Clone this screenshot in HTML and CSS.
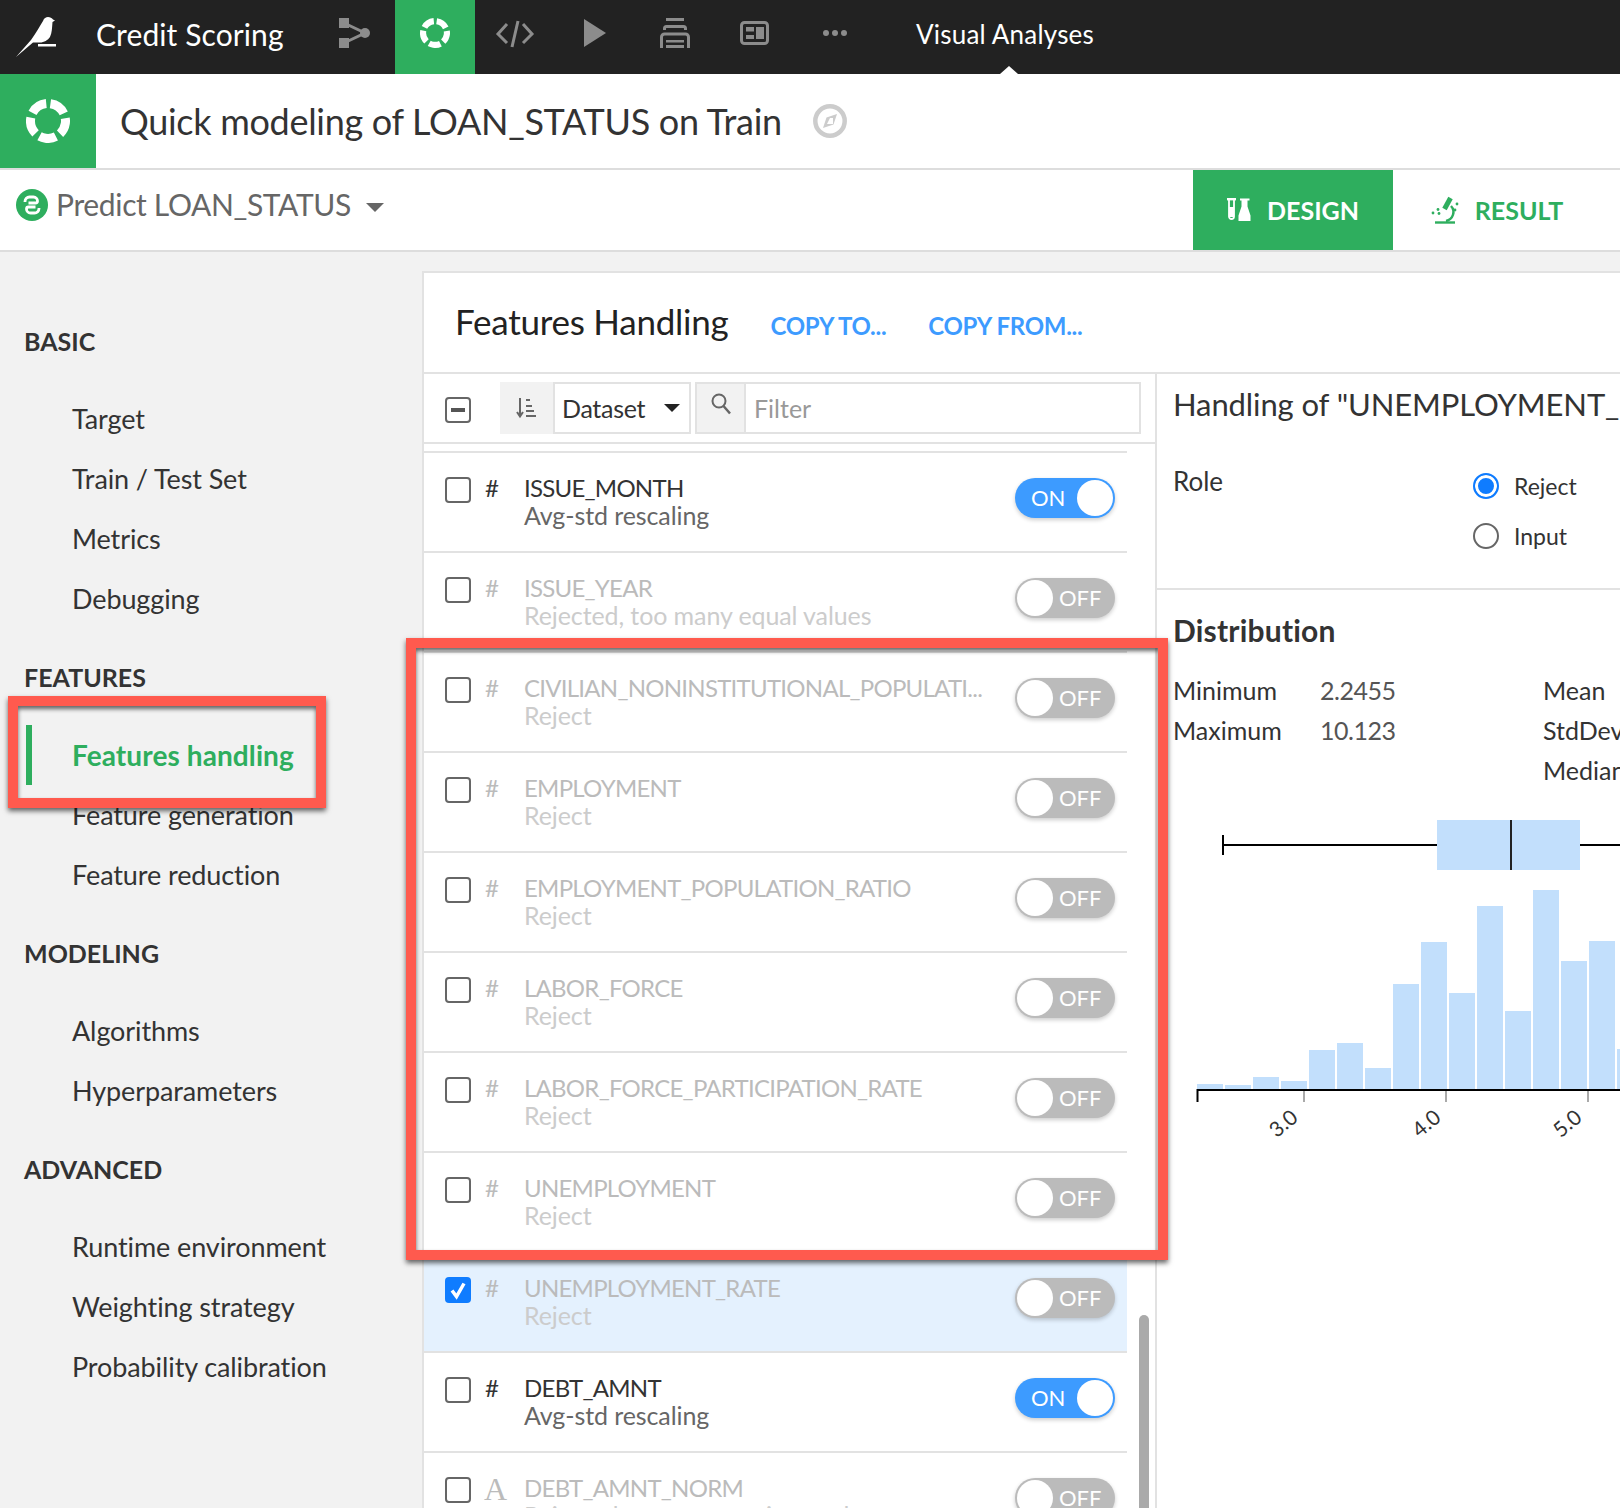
FILE: index.html
```html
<!DOCTYPE html>
<html lang="en">
<head>
    <meta charset="UTF-8">
    <title>Credit Scoring - Visual Analyses</title>
    <link rel="stylesheet" href="styles.css">
</head>
<body>
    <svg class="defs" width="0" height="0">
        <symbol id="ring" viewBox="0 0 44 44">
            <circle cx="22" cy="22" r="17.5" fill="none" stroke="#fff" stroke-width="9" stroke-dasharray="17 5" transform="rotate(-82 22 22)"/>
        </symbol>
    </svg>

    <div class="topbar">
        <svg class="logo" width="96" height="74" viewBox="0 0 96 74">
            <path fill="#fff" d="M16 57L31 40C36 33 40 26 43 21C44 18 46 17 48 17C50 17 52 18 53 19.5L55 20.5L52.5 22C52 28 52 33 50 37C48 40 44 42.500 40 42.500L33 42.500Z"/>
            <rect x="38" y="44" width="18" height="2.5" fill="#fff"/>
        </svg>
        <div class="project">Credit Scoring</div>
        <div class="nav-item">
            <svg width="80" height="74" viewBox="0 0 80 74">
                <path d="M29 23L50 33L29 43" fill="none" stroke="#8c8c8c" stroke-width="3"/>
                <rect x="24" y="18" width="10" height="10" fill="#8c8c8c"/>
                <rect x="24" y="38" width="10" height="10" fill="#8c8c8c"/>
                <circle cx="50" cy="33" r="5" fill="#8c8c8c"/>
            </svg>
        </div>
        <div class="nav-item active">
            <svg width="30" height="30"><use href="#ring"/></svg>
        </div>
        <div class="nav-item">
            <svg width="80" height="74" viewBox="0 0 80 74">
                <path d="M32 24L23 34L32 43M48 24L57 34L48 43M43 21L37 47" fill="none" stroke="#8c8c8c" stroke-width="3"/>
            </svg>
        </div>
        <div class="nav-item">
            <svg width="80" height="74" viewBox="0 0 80 74">
                <polygon points="29,19 51,33 29,47" fill="#8c8c8c"/>
            </svg>
        </div>
        <div class="nav-item">
            <svg width="80" height="74" viewBox="0 0 80 74">
                <g fill="none" stroke="#8c8c8c" stroke-width="3">
                    <path d="M31 19.5h18"/>
                    <path d="M29.5 30v-1.500a2 2 0 0 1 2-2h17a2 2 0 0 1 2 2v1.500"/>
                    <path d="M26.500 48v-11a3 3 0 0 1 3-3h21a3 3 0 0 1 3 3v11"/>
                </g>
                <rect x="31" y="40" width="18" height="2.500" fill="#8c8c8c"/>
                <rect x="31" y="45" width="18" height="3" fill="#8c8c8c"/>
            </svg>
        </div>
        <div class="nav-item">
            <svg width="80" height="74" viewBox="0 0 80 74">
                <rect x="26.500" y="22.500" width="26" height="21" rx="3" fill="none" stroke="#8c8c8c" stroke-width="3"/>
                <rect x="31" y="27" width="8" height="4.500" fill="#8c8c8c"/>
                <rect x="31" y="35" width="8" height="4" fill="#8c8c8c"/>
                <rect x="41" y="27" width="8" height="12" fill="#8c8c8c"/>
            </svg>
        </div>
        <div class="nav-item">
            <svg width="80" height="74" viewBox="0 0 80 74">
                <circle cx="31" cy="33" r="3" fill="#8c8c8c"/>
                <circle cx="40" cy="33" r="3" fill="#8c8c8c"/>
                <circle cx="49" cy="33" r="3" fill="#8c8c8c"/>
            </svg>
        </div>
        <div class="section-name">Visual Analyses</div>
    </div>

    <div class="titlebar">
        <div class="title-icon"><svg width="44" height="44"><use href="#ring"/></svg></div>
        <h1 class="title">Quick modeling of LOAN_STATUS on Train</h1>
        <svg class="compass" width="34" height="34" viewBox="0 0 34 34">
            <circle cx="17" cy="17" r="14.700" fill="none" stroke="#ccc" stroke-width="4.500"/>
            <polygon points="24,10 20.500,20.500 10,24 13.500,13.500" fill="#ccc"/>
            <polygon points="17,14 20,14 20,20 14,20" fill="#fff"/>
        </svg>
    </div>

    <div class="tabbar">
        <svg class="python" width="32" height="32" viewBox="0 0 32 32">
            <circle cx="16" cy="16" r="16" fill="#2eae5e"/>
            <g fill="none" stroke="#fff" stroke-width="2.800">
                <path id="snake" d="M9 13v-.5a4.500 4.500 0 0 1 4.500-4.500h4a4 4 0 0 1 4 4a2 2 0 0 1-2 2h-7"/>
                <use href="#snake" transform="rotate(180 16 16)"/>
            </g>
        </svg>
        <div class="task-name">Predict LOAN_STATUS</div>
        <div class="task-caret"></div>
        <div class="tab active">
            <svg width="24" height="24" viewBox="0 0 24 24">
                <path d="M0 1.200h9" stroke="#fff" stroke-width="2.400"/>
                <path d="M2 1v17.500a2.500 2.500 0 0 0 5 0V1" fill="none" stroke="#fff" stroke-width="1.800"/>
                <rect x="2" y="9" width="5" height="10" fill="#fff"/>
                <path d="M13 0.500h9.500v2h-2v6l3 9v5.500h-12v-5.500l3-9v-6h-1.500z" fill="#fff"/>
            </svg>
            DESIGN
        </div>
        <div class="tab">
            <svg width="28" height="28" viewBox="0 0 28 28">
                <path d="M4 26.500h20" stroke="#2eae5e" stroke-width="2.400"/>
                <path d="M19.500 2L13.500 13" stroke="#2eae5e" stroke-width="5"/>
                <path d="M20 10a9 9 0 0 1-5 15" fill="none" stroke="#2eae5e" stroke-width="2.400"/>
                <circle cx="2" cy="17" r="1.400" fill="#2eae5e"/>
                <circle cx="7" cy="13.500" r="1.400" fill="#2eae5e"/>
                <circle cx="8" cy="17.500" r="1.400" fill="#2eae5e"/>
                <circle cx="26" cy="8" r="1.400" fill="#2eae5e"/>
                <circle cx="24" cy="14" r="1.400" fill="#2eae5e"/>
            </svg>
            RESULT
        </div>
    </div>

    <div class="content">
        <div class="sidebar">
            <div class="side-title">BASIC</div>
            <div class="side-item">Target</div>
            <div class="side-item">Train / Test Set</div>
            <div class="side-item">Metrics</div>
            <div class="side-item">Debugging</div>
            <div class="side-title">FEATURES</div>
            <div class="side-item selected">Features handling</div>
            <div class="side-item">Feature generation</div>
            <div class="side-item">Feature reduction</div>
            <div class="side-title">MODELING</div>
            <div class="side-item">Algorithms</div>
            <div class="side-item">Hyperparameters</div>
            <div class="side-title">ADVANCED</div>
            <div class="side-item">Runtime environment</div>
            <div class="side-item">Weighting strategy</div>
            <div class="side-item">Probability calibration</div>
        </div>

        <div class="panel">
            <div class="panel-header">
                <h2 class="panel-title">Features Handling</h2>
                <span class="panel-link">COPY TO...</span>
                <span class="panel-link">COPY FROM...</span>
            </div>
            <div class="panel-body">
                <div class="features">
                    <div class="toolbar">
                        <div class="check minus"></div>
                        <div class="sort-btn">
                            <svg width="22" height="22" viewBox="0 0 22 22">
                                <path d="M4 1v18M1 15l3 4.500L7 15" fill="none" stroke="#666" stroke-width="2"/>
                                <path d="M10 3h4M10 9h6M10 14h8M10 19h10" stroke="#666" stroke-width="2"/>
                            </svg>
                        </div>
                        <div class="sort-select">Dataset<span class="select-caret"></span></div>
                        <div class="search">
                            <div class="search-icon">
                                <svg width="22" height="24" viewBox="0 0 22 24">
                                    <circle cx="9" cy="9" r="6.500" fill="none" stroke="#666" stroke-width="2"/>
                                    <path d="M13.500 14L20 21.500" stroke="#666" stroke-width="2.500"/>
                                </svg>
                            </div>
                            <div class="search-text">Filter</div>
                        </div>
                    </div>
                    <div class="list">
                        <div class="scrollbar"></div>
                        <div class="row">
                            <div class="check"></div><div class="type">#</div>
                            <div class="info"><div class="name">ISSUE_MONTH</div><div class="desc">Avg-std rescaling</div></div>
                            <div class="toggle on">ON</div>
                        </div>
                        <div class="row off">
                            <div class="check"></div><div class="type">#</div>
                            <div class="info"><div class="name">ISSUE_YEAR</div><div class="desc">Rejected, too many equal values</div></div>
                            <div class="toggle">OFF</div>
                        </div>
                        <div class="row off">
                            <div class="check"></div><div class="type">#</div>
                            <div class="info"><div class="name">CIVILIAN_NONINSTITUTIONAL_POPULATI...</div><div class="desc">Reject</div></div>
                            <div class="toggle">OFF</div>
                        </div>
                        <div class="row off">
                            <div class="check"></div><div class="type">#</div>
                            <div class="info"><div class="name">EMPLOYMENT</div><div class="desc">Reject</div></div>
                            <div class="toggle">OFF</div>
                        </div>
                        <div class="row off">
                            <div class="check"></div><div class="type">#</div>
                            <div class="info"><div class="name">EMPLOYMENT_POPULATION_RATIO</div><div class="desc">Reject</div></div>
                            <div class="toggle">OFF</div>
                        </div>
                        <div class="row off">
                            <div class="check"></div><div class="type">#</div>
                            <div class="info"><div class="name">LABOR_FORCE</div><div class="desc">Reject</div></div>
                            <div class="toggle">OFF</div>
                        </div>
                        <div class="row off">
                            <div class="check"></div><div class="type">#</div>
                            <div class="info"><div class="name">LABOR_FORCE_PARTICIPATION_RATE</div><div class="desc">Reject</div></div>
                            <div class="toggle">OFF</div>
                        </div>
                        <div class="row off">
                            <div class="check"></div><div class="type">#</div>
                            <div class="info"><div class="name">UNEMPLOYMENT</div><div class="desc">Reject</div></div>
                            <div class="toggle">OFF</div>
                        </div>
                        <div class="row off picked">
                            <div class="check checked">
                                <svg width="26" height="26" viewBox="0 0 26 26"><path d="M7 13.500l4.500 6L19 6.500" fill="none" stroke="#fff" stroke-width="3.500"/></svg>
                            </div>
                            <div class="type">#</div>
                            <div class="info"><div class="name">UNEMPLOYMENT_RATE</div><div class="desc">Reject</div></div>
                            <div class="toggle">OFF</div>
                        </div>
                        <div class="row">
                            <div class="check"></div><div class="type">#</div>
                            <div class="info"><div class="name">DEBT_AMNT</div><div class="desc">Avg-std rescaling</div></div>
                            <div class="toggle on">ON</div>
                        </div>
                        <div class="row off">
                            <div class="check"></div><div class="type text-type">A</div>
                            <div class="info"><div class="name">DEBT_AMNT_NORM</div><div class="desc">Rejected, too many unique values</div></div>
                            <div class="toggle">OFF</div>
                        </div>
                    </div>
                </div>

                <div class="details">
                    <div class="details-top">
                        <h3 class="details-title">Handling of "UNEMPLOYMENT_RATE"</h3>
                        <div class="role">
                            <div class="role-label">Role</div>
                            <div class="role-options">
                                <div class="radio-line"><span class="radio on"></span>Reject</div>
                                <div class="radio-line"><span class="radio"></span>Input</div>
                            </div>
                        </div>
                    </div>
                    <div class="details-stats">
                        <h3 class="stats-title">Distribution</h3>
                        <div class="stats">
                            <div>Minimum</div><div class="stat-value">2.2455</div><div>Mean</div>
                            <div>Maximum</div><div class="stat-value">10.123</div><div>StdDev</div>
                            <div></div><div></div><div>Median</div>
                        </div>
                        <svg class="chart" width="446" height="340" viewBox="1174 800 446 340">
                            <!-- box plot -->
                            <path d="M1223 845H1437M1580 845H1620M1223 835V855" fill="none" stroke="#000" stroke-width="2"/>
                            <rect x="1437" y="820" width="143" height="50" fill="#c2dffc"/>
                            <rect x="1510" y="820" width="2" height="50" fill="#222"/>
                            <!-- histogram -->
                            <g fill="#c2dffc">
                                <rect x="1197" y="1084" width="26" height="5"/>
                                <rect x="1225" y="1085" width="26" height="4"/>
                                <rect x="1253" y="1077" width="26" height="12"/>
                                <rect x="1281" y="1081" width="26" height="8"/>
                                <rect x="1309" y="1050" width="26" height="39"/>
                                <rect x="1337" y="1043" width="26" height="46"/>
                                <rect x="1365" y="1068" width="26" height="21"/>
                                <rect x="1393" y="984" width="26" height="105"/>
                                <rect x="1421" y="942" width="26" height="147"/>
                                <rect x="1449" y="993" width="26" height="96"/>
                                <rect x="1477" y="906" width="26" height="183"/>
                                <rect x="1505" y="1011" width="26" height="78"/>
                                <rect x="1533" y="890" width="26" height="199"/>
                                <rect x="1561" y="961" width="26" height="128"/>
                                <rect x="1589" y="941" width="26" height="148"/>
                                <rect x="1617" y="1049" width="26" height="40"/>
                            </g>
                            <!-- axis -->
                            <path d="M1197.500 1102V1090H1620" fill="none" stroke="#000" stroke-width="2"/>
                            <path d="M1304 1091V1102M1446 1091V1102M1588 1091V1102" stroke="#aaa" stroke-width="2"/>
                            <text class="tick" transform="translate(1288 1129) rotate(-40)" text-anchor="middle">3.0</text>
                            <text class="tick" transform="translate(1431 1129) rotate(-40)" text-anchor="middle">4.0</text>
                            <text class="tick" transform="translate(1572 1129) rotate(-40)" text-anchor="middle">5.0</text>
                        </svg>
                    </div>
                </div>
            </div>
        </div>
    </div>

    <!-- red annotation boxes -->
    <div class="callout callout-side"></div>
    <div class="callout callout-rows"></div>
</body>
</html>
```

FILE: styles.css
```css
/* Body Styling */
body {
    margin: 0;
    height: 1508px;
    overflow: hidden;
    position: relative;
    font-family: "Lato", "Noto Sans", sans-serif;
    color: #333;
    background-color: #f2f2f2;
}

.defs {
    position: absolute;
}

h1, h2, h3 {
    margin: 0;
    font-weight: 400;
}

/* Top Bar */
.topbar {
    display: flex;
    align-items: stretch;
    height: 74px;
    background-color: #222;
    color: #fff;
}

.logo {
    flex: none;
}

.project {
    width: 219px;
    flex: none;
    padding-top: 16px;
    font-size: 30px;
    line-height: 36px;
    letter-spacing: 0.1px;
    box-sizing: border-box;
}

.nav-item {
    width: 80px;
    flex: none;
    display: flex;
    justify-content: center;
}

.nav-item.active {
    background-color: #2eae5e;
    align-items: flex-start;
    padding-top: 18px;
    box-sizing: border-box;
}

.section-name {
    position: relative;
    margin-left: 41px;
    padding-top: 16px;
    font-size: 26px;
    line-height: 36px;
    letter-spacing: 0.2px;
    white-space: nowrap;
    width: 178px;
    text-align: center;
}

.section-name::after {
    content: "";
    position: absolute;
    left: 84px;
    bottom: 0;
    border-left: 9px solid transparent;
    border-right: 9px solid transparent;
    border-bottom: 8px solid #fff;
}

/* Title Bar */
.titlebar {
    display: flex;
    align-items: center;
    height: 94px;
    background-color: #fff;
    border-bottom: 2px solid #ddd;
}

.title-icon {
    width: 96px;
    height: 94px;
    flex: none;
    display: flex;
    align-items: center;
    justify-content: center;
    background-color: #2eae5e;
}

.title {
    margin-left: 24px;
    font-size: 36px;
    letter-spacing: -0.3px;
    white-space: nowrap;
}

.compass {
    margin-left: 31px;
}

/* Tab Bar */
.tabbar {
    display: flex;
    align-items: flex-start;
    height: 80px;
    background-color: #fff;
    border-bottom: 2px solid #ddd;
}

.python {
    margin: 19px 0 0 16px;
    flex: none;
}

.task-name {
    margin: 15px 0 0 8px;
    font-size: 30px;
    line-height: 38px;
    letter-spacing: -0.35px;
    color: #666;
}

.task-caret {
    margin: 33px 0 0 15px;
    border-left: 9px solid transparent;
    border-right: 9px solid transparent;
    border-top: 9px solid #666;
}

.tab {
    display: flex;
    align-items: center;
    justify-content: center;
    gap: 16px;
    width: 200px;
    height: 80px;
    font-size: 25px;
    font-weight: 700;
    color: #2eae5e;
}

.tab.active {
    margin-left: auto;
    color: #fff;
    background-color: #2eae5e;
}

.tab:last-child {
    width: 208px;
    margin-right: 19px;
}

/* Sidebar */
.content {
    display: flex;
    align-items: flex-start;
}

.sidebar {
    width: 422px;
    flex: none;
    padding-top: 68px;
    box-sizing: border-box;
}

.side-title {
    height: 42px;
    margin: 27px 0;
    padding-left: 24px;
    font-size: 25px;
    font-weight: 700;
    line-height: 42px;
}

.side-title:first-child {
    margin-top: 0;
}

.side-item {
    height: 60px;
    padding-left: 72px;
    font-size: 27px;
    line-height: 60px;
    letter-spacing: -0.1px;
}

.side-item.selected {
    position: relative;
    font-size: 28px;
    font-weight: 700;
    color: #2eae5e;
    letter-spacing: 0.1px;
}

.side-item.selected::before {
    content: "";
    position: absolute;
    left: 26px;
    top: 0;
    width: 6px;
    height: 60px;
    background-color: #2eae5e;
}

/* Panel */
.panel {
    flex: none;
    width: 1198px;
    height: 1237px;
    margin-top: 19px;
    background-color: #fff;
    border-top: 2px solid #e2e2e2;
    border-left: 2px solid #e2e2e2;
    box-sizing: border-box;
    overflow: hidden;
}

.panel-header {
    display: flex;
    align-items: baseline;
    gap: 42px;
    height: 101px;
    padding: 27px 0 0 31px;
    border-bottom: 2px solid #e2e2e2;
    box-sizing: border-box;
}

.panel-title {
    font-size: 35px;
    letter-spacing: -0.25px;
    color: #222;
}

.panel-link {
    font-size: 24px;
    font-weight: 700;
    letter-spacing: -0.3px;
    color: #3d9bff;
}

.panel-body {
    display: flex;
}

.features {
    width: 731px;
    flex: none;
    border-right: 2px solid #e2e2e2;
}

/* Toolbar */
.toolbar {
    display: flex;
    align-items: center;
    height: 70px;
    padding-left: 21px;
    border-bottom: 2px solid #e2e2e2;
    box-sizing: border-box;
}

.check {
    width: 26px;
    height: 26px;
    flex: none;
    border: 2px solid #666;
    border-radius: 4px;
    background-color: #fff;
    box-sizing: border-box;
}

.check.minus {
    position: relative;
    margin-top: 4px;
}

.check.minus::after {
    content: "";
    position: absolute;
    left: 4px;
    top: 9px;
    width: 14px;
    height: 4px;
    background-color: #555;
}

.check.checked {
    border: none;
    background-color: #0f7cff;
}

.sort-btn {
    display: flex;
    align-items: center;
    justify-content: center;
    width: 53px;
    height: 52px;
    margin-left: 29px;
    background-color: #f2f2f2;
}

.sort-select {
    display: flex;
    align-items: center;
    justify-content: space-between;
    width: 138px;
    height: 52px;
    padding: 0 9px 0 7px;
    border: 2px solid #e2e2e2;
    font-size: 25px;
    letter-spacing: -0.3px;
    box-sizing: border-box;
}

.select-caret {
    border-left: 8px solid transparent;
    border-right: 8px solid transparent;
    border-top: 8px solid #222;
}

.search {
    display: flex;
    width: 446px;
    height: 52px;
    margin-left: 4px;
    border: 2px solid #e2e2e2;
    box-sizing: border-box;
}

.search-icon {
    display: flex;
    justify-content: center;
    width: 49px;
    padding-top: 8px;
    background-color: #f2f2f2;
    border-right: 2px solid #e2e2e2;
    box-sizing: border-box;
}

.search-text {
    padding-left: 8px;
    font-size: 25px;
    line-height: 48px;
    color: #999;
}

/* Feature Rows */
.list {
    position: relative;
    width: 703px;
    margin-top: 7px;
    border-top: 2px solid #e2e2e2;
}

.scrollbar {
    position: absolute;
    left: 715px;
    top: 862px;
    width: 10px;
    height: 300px;
    border-radius: 5px;
    background-color: #aaa;
}

.row {
    display: flex;
    align-items: flex-start;
    height: 100px;
    padding: 24px 12px 0 21px;
    border-bottom: 2px solid #e2e2e2;
    box-sizing: border-box;
    background-color: #fff;
}

.row.picked {
    background-color: #e4f1fe;
}

.type {
    width: 39px;
    flex: none;
    margin: -1px 0 0 14px;
    font-size: 24px;
    line-height: 24px;
    color: #333;
}

.text-type {
    margin-left: 13px;
    width: 40px;
    font-family: "Liberation Serif", serif;
    font-size: 32px;
    line-height: 26px;
}

.info {
    width: 476px;
    flex: none;
}

.name {
    margin-top: -4px;
    font-size: 24px;
    line-height: 30px;
    letter-spacing: -0.74px;
    color: #333;
    white-space: nowrap;
}

.desc {
    margin-top: -1px;
    font-size: 25px;
    line-height: 26px;
    letter-spacing: -0.1px;
    color: #666;
    white-space: nowrap;
}

.row.off .name, .row.off .type {
    color: #bbb;
}

.row.off .desc {
    color: #ccc;
}

.toggle {
    position: relative;
    flex: none;
    width: 100px;
    height: 40px;
    margin: 1px 0 0 auto;
    padding-left: 44px;
    border-radius: 20px;
    background-color: #bbb;
    box-shadow: 0 2px 4px rgba(0, 0, 0, 0.2);
    font-size: 22px;
    line-height: 40px;
    color: #fff;
    box-sizing: border-box;
}

.toggle::after {
    content: "";
    position: absolute;
    left: 2px;
    top: 2px;
    width: 36px;
    height: 36px;
    border-radius: 50%;
    background-color: #fff;
}

.toggle.on {
    padding-left: 16px;
    background-color: #3d9bff;
}

.toggle.on::after {
    left: 62px;
}

/* Details Pane */
.details {
    flex: 1;
    min-width: 0;
}

.details-top {
    height: 216px;
    padding: 10px 0 0 16px;
    border-bottom: 2px solid #e2e2e2;
    box-sizing: border-box;
}

.details-title {
    font-size: 31px;
    line-height: 40px;
    letter-spacing: -0.1px;
    color: #333;
    white-space: nowrap;
}

.role {
    display: flex;
    margin-top: 37px;
}

.role-label {
    width: 300px;
    font-size: 26px;
    line-height: 40px;
}

.radio-line {
    display: flex;
    align-items: center;
    height: 50px;
    font-size: 23px;
    white-space: nowrap;
}

.radio {
    width: 26px;
    height: 26px;
    margin-right: 15px;
    border: 2px solid #666;
    border-radius: 50%;
    box-sizing: border-box;
}

.radio.on {
    border-color: #0f7cff;
    background-color: #0f7cff;
    box-shadow: inset 0 0 0 3px #fff;
}

.details-stats {
    padding: 20px 0 0 16px;
}

.stats-title {
    font-size: 30px;
    font-weight: 700;
    line-height: 40px;
    letter-spacing: 0.2px;
}

.stats {
    display: grid;
    grid-template-columns: 147px 223px 100px;
    margin-top: 20px;
    font-size: 25px;
    line-height: 40px;
    white-space: nowrap;
}

.stat-value {
    color: #555;
    letter-spacing: -0.5px;
}

.chart {
    display: block;
    margin: 10px 0 0 1px;
}

.tick {
    font-size: 21px;
    fill: #333;
}

/* Annotation Boxes */
.callout {
    position: absolute;
    border: 10px solid #ff5a4e;
    box-sizing: border-box;
    box-shadow: 0 3px 5px rgba(0, 0, 0, 0.6), inset 0 3px 4px rgba(0, 0, 0, 0.6);
}

.callout-side {
    left: 8px;
    top: 696px;
    width: 318px;
    height: 112px;
}

.callout-rows {
    left: 406px;
    top: 638px;
    width: 762px;
    height: 622px;
}
```
